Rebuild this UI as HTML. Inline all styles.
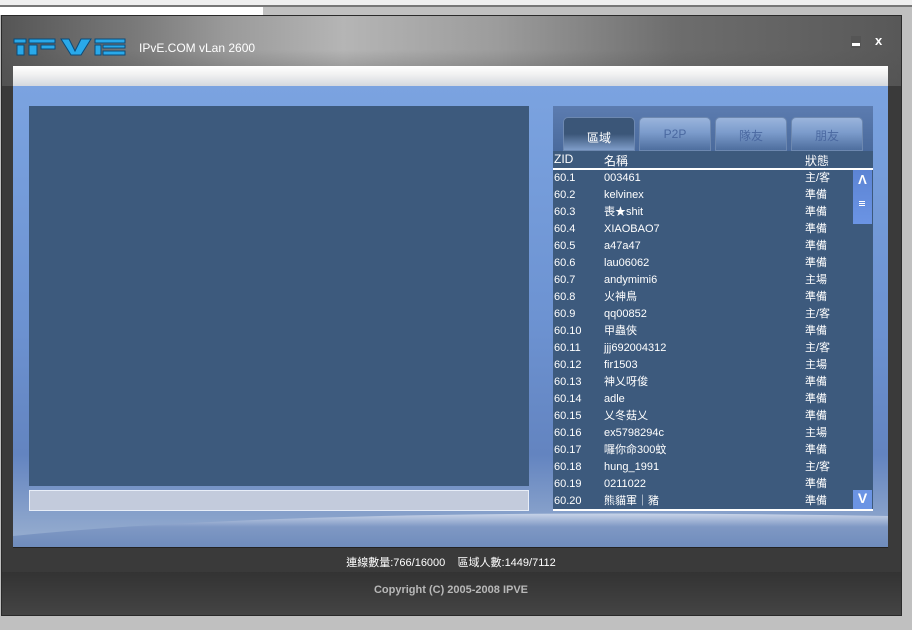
<!DOCTYPE html>
<html style="overflow:hidden"><head><meta charset="utf-8"><style>
*{margin:0;padding:0;box-sizing:border-box}
html,body{width:912px;height:630px;overflow:hidden}
body{background:#c0c0c0;position:relative;font-family:"Liberation Sans","Noto Sans CJK TC",sans-serif}
.abs{position:absolute}
.tab{position:absolute;top:117px;width:72px;height:34px;border-radius:5px 5px 0 0;border:1px solid #6d88b0;font-size:12px;text-align:center;padding-top:9px}
.in{background:linear-gradient(180deg,#9ab4dc 0%,#7c9ccc 45%,#4e6e9e 100%);color:#4a68a0}
.r{position:relative;height:17px}.r span{position:absolute}.r span:nth-child(1){left:1px}.r span:nth-child(2){left:51px}.r span:nth-child(3){left:252px}
</style></head><body>
<div class="abs" style="left:0;top:0;width:912px;height:6px;background:#efefef"></div>
<div class="abs" style="left:0;top:5px;width:912px;height:2px;background:#777"></div>
<div class="abs" style="left:0;top:7px;width:263px;height:8px;background:#fff"></div>
<div class="abs" style="left:1px;top:15px;width:901px;height:601px;background:#3a3a3a;border:1px solid #2a2a2a"></div>
<div class="abs" style="left:2px;top:16px;width:899px;height:70px;background:linear-gradient(90deg,#555 0%,#7a7a7a 15%,#9a9a9a 25%,#b5b5b5 38%,#9c9c9c 55%,#6d6d6d 75%,#585858 100%)"></div>
<div class="abs" style="left:2px;top:50px;width:899px;height:36px;background:linear-gradient(180deg,rgba(90,90,90,0) 0%,rgba(80,80,80,.5) 100%)"></div>
<svg class="abs" style="left:13px;top:37px" width="114" height="20" viewBox="0 0 114 20">
<g fill="#29a9ea" stroke="#0b4a78" stroke-width="1">
<rect x="1" y="2" width="12" height="4"/><rect x="4" y="8" width="7" height="10"/>
<rect x="16" y="2" width="26" height="4"/><rect x="16" y="8" width="8" height="10"/><rect x="28" y="8" width="14" height="4"/>
<polygon points="48,2 56,2 62,14 68,2 78,2 68,18 58,18"/>
<rect x="82" y="2" width="30" height="4"/><rect x="82" y="8" width="6" height="10"/><rect x="90" y="8" width="22" height="3"/><rect x="90" y="14" width="22" height="4"/>
</g></svg>
<div class="abs" style="left:139px;top:41px;font-size:12px;color:#fff">IPvE.COM vLan 2600</div>
<div class="abs" style="left:851px;top:36px;width:10px;height:12px;background:#555"></div>
<div class="abs" style="left:852px;top:43px;width:8px;height:3px;background:#fff"></div>
<div class="abs" style="left:875px;top:33px;font-size:13px;font-weight:bold;color:#fff">x</div>
<div class="abs" style="left:13px;top:66px;width:875px;height:20px;background:linear-gradient(180deg,#fff 0%,#f2f2f2 40%,#d4d8de 100%)"></div>
<div class="abs" style="left:13px;top:86px;width:875px;height:461px;background:linear-gradient(180deg,#7ba3e0 0%,#6d93d2 50%,#6384c0 80%,#9ab0d0 100%)"></div>
<svg class="abs" style="left:13px;top:486px" width="875" height="61" viewBox="0 0 875 61">
<defs><linearGradient id="g" x1="0" y1="0" x2="0" y2="1"><stop offset="0" stop-color="#c8d4e8"/><stop offset=".4" stop-color="#7f98c4"/><stop offset="1" stop-color="#6f8cbc"/></linearGradient></defs>
<path d="M0,50 Q300,20 875,30 L875,61 L0,61 Z" fill="url(#g)"/>
</svg>
<div class="abs" style="left:29px;top:106px;width:500px;height:380px;background:#3d5a7d"></div>
<div class="abs" style="left:29px;top:490px;width:500px;height:21px;background:#c3cbdc;border:1px solid #e8eef8"></div>
<div class="abs" style="left:553px;top:106px;width:320px;height:405px;background:#3d5a7d;border-bottom:2px solid #fff"></div>
<div class="abs" style="left:553px;top:106px;width:320px;height:45px;background:linear-gradient(180deg,#5c7cb0 0%,#4a6a9c 100%)"></div>
<div class="tab" style="left:563px;background:linear-gradient(180deg,#3b5678 0%,#3b5678 50%,#7e9cc8 100%);color:#fff;padding-top:11px">區域</div>
<div class="tab in" style="left:639px">P2P</div>
<div class="tab in" style="left:715px">隊友</div>
<div class="tab in" style="left:791px">朋友</div>
<div class="abs" style="left:553px;top:151px;width:320px;height:18px;background:#3d5a7d;font-size:12px;color:#fff">
<span class="abs" style="left:1px;top:1px">ZID</span><span class="abs" style="left:51px;top:1px">名稱</span><span class="abs" style="left:252px;top:1px">狀態</span></div>
<div class="abs" style="left:553px;top:168px;width:320px;height:2px;background:#fff"></div>
<div class="abs" style="left:853px;top:170px;width:19px;height:339px;background:#3d5a7d"></div>
<div class="abs" style="left:853px;top:170px;width:19px;height:54px;background:linear-gradient(180deg,#5c84d4,#6b94e4)"></div>
<div class="abs" style="left:853px;top:172px;width:19px;font-size:13px;font-weight:bold;color:#fff;text-align:center">&#923;</div>
<div class="abs" style="left:859px;top:201px;width:6px;height:1px;background:#fff;box-shadow:0 2px 0 #fff,0 4px 0 #fff"></div>
<div class="abs" style="left:853px;top:490px;width:19px;height:19px;background:#6b94e4;font-size:14px;font-weight:bold;color:#fff;text-align:center">V</div>
<div class="abs" style="left:553px;top:170px;width:300px;font-size:11px;color:#fff;line-height:17px">
<div class="r"><span>60.1</span><span>003461</span><span>主/客</span></div>
<div class="r"><span>60.2</span><span>kelvinex</span><span>準備</span></div>
<div class="r"><span>60.3</span><span>喪★shit</span><span>準備</span></div>
<div class="r"><span>60.4</span><span>XIAOBAO7</span><span>準備</span></div>
<div class="r"><span>60.5</span><span>a47a47</span><span>準備</span></div>
<div class="r"><span>60.6</span><span>lau06062</span><span>準備</span></div>
<div class="r"><span>60.7</span><span>andymimi6</span><span>主場</span></div>
<div class="r"><span>60.8</span><span>火神鳥</span><span>準備</span></div>
<div class="r"><span>60.9</span><span>qq00852</span><span>主/客</span></div>
<div class="r"><span>60.10</span><span>甲蟲俠</span><span>準備</span></div>
<div class="r"><span>60.11</span><span>jjj692004312</span><span>主/客</span></div>
<div class="r"><span>60.12</span><span>fir1503</span><span>主場</span></div>
<div class="r"><span>60.13</span><span>神乂呀俊</span><span>準備</span></div>
<div class="r"><span>60.14</span><span>adle</span><span>準備</span></div>
<div class="r"><span>60.15</span><span>乂冬菇乂</span><span>準備</span></div>
<div class="r"><span>60.16</span><span>ex5798294c</span><span>主場</span></div>
<div class="r"><span>60.17</span><span>囉你命300蚊</span><span>準備</span></div>
<div class="r"><span>60.18</span><span>hung_1991</span><span>主/客</span></div>
<div class="r"><span>60.19</span><span>0211022</span><span>準備</span></div>
<div class="r"><span>60.20</span><span>熊貓軍｜豬</span><span>準備</span></div>
</div>
<div class="abs" style="left:13px;top:547px;width:875px;height:1px;background:#222"></div>
<div class="abs" style="left:0;top:554px;width:902px;text-align:center;font-size:11px;color:#fff">連線數量:766/16000&nbsp;&nbsp;&nbsp; 區域人數:1449/7112</div>
<div class="abs" style="left:2px;top:572px;width:899px;height:43px;background:linear-gradient(180deg,#333 0%,#444 100%)"></div>
<div class="abs" style="left:0;top:584px;width:902px;text-align:center;font-size:11px;font-weight:bold;color:#b8b8b8">Copyright (C) 2005-2008 IPVE</div>
</body></html>
